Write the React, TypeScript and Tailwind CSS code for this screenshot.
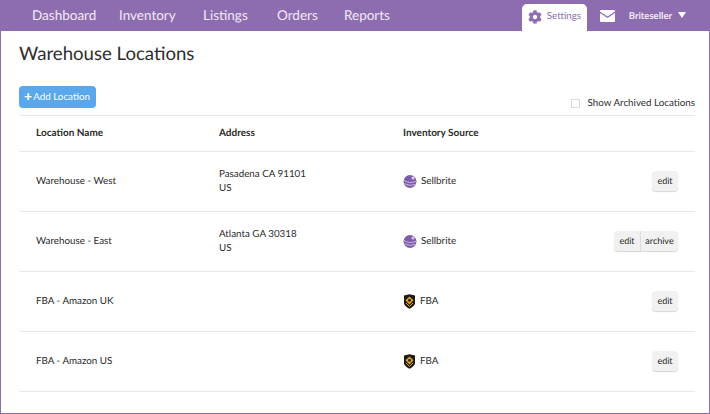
import { FaCog } from "react-icons/fa"

const navItems = [
  { label: "Dashboard", className: "w-[87px]" },
  { label: "Inventory", className: "w-[84px]" },
  { label: "Listings", className: "w-[74px]" },
  { label: "Orders", className: "w-[67px]" },
  { label: "Reports", className: "w-[60px]" },
]

const rows = [
  { name: "Warehouse - West", address: ["Pasadena CA 91101", "US"], source: "Sellbrite", archive: false },
  { name: "Warehouse - East", address: ["Atlanta GA 30318", "US"], source: "Sellbrite", archive: true },
  { name: "FBA - Amazon UK", address: [], source: "FBA", archive: false },
  { name: "FBA - Amazon US", address: [], source: "FBA", archive: false },
]

function SellbriteIcon() {
  return (
    <svg width="14" height="15" viewBox="0 0 14 15" className="shrink-0">
      <circle cx="7" cy="7.500" r="6.500" fill="#7d5cab" />
      <path d="M1 6.500c3 2.200 7.500 2.600 12 1" stroke="#e6def0" strokeWidth="0.7" fill="none" />
      <path d="M1.500 9.500c3 2 7 2.200 10.800 .8" stroke="#e6def0" strokeWidth="0.7" fill="none" />
      <circle cx="10" cy="4" r="1.500" fill="#d9cde9" />
    </svg>
  )
}

function FbaIcon() {
  return (
    <svg width="13" height="15" viewBox="0 0 12 15" className="shrink-0">
      <path d="M.5 1.500 6 .2l5.500 1.300v7.500c0 2.500-3 4.500-5.500 5.800C3.500 13.500.5 11.500.5 9z" fill="#1c1a17" />
      <path d="M6 2.600 10 6.200 6 10.400 2 6.200z" fill="#e3a21f" />
      <path d="M2.500 9 6 12.400 9.500 9" stroke="#e3a21f" strokeWidth="1" fill="none" />
      <circle cx="6" cy="6.300" r="1.500" fill="#2a2620" />
    </svg>
  )
}

function MailIcon() {
  return (
    <svg width="15" height="12" viewBox="0 0 15 12">
      <rect width="15" height="12" rx="1" fill="#ffffff" />
      <path d="M0 2.200 7.500 7.200 15 2.200" stroke="#8e6cb0" strokeWidth="1.200" fill="none" />
    </svg>
  )
}

function TopNav() {
  return (
    <nav className="flex h-[31px] items-stretch bg-[#8e6cb0] pl-[32px] pr-[24px] text-white">
      <div className="flex flex-1 items-center pb-[1px] text-[13.500px] text-[#f1ebf6]">
        {navItems.map((item) => (
          <span key={item.label} className={item.className}>
            {item.label}
          </span>
        ))}
      </div>
      <div className="mt-[4px] flex w-[65px] items-center gap-[5px] rounded-t-[5px] bg-white pb-[2px] pl-[6px] text-[#8e6cb0]">
        <FaCog size={14} />
        <span className="text-[9.800px]">Settings</span>
      </div>
      <div className="ml-[13px] flex items-center">
        <MailIcon />
      </div>
      <div className="ml-[14px] flex items-center pt-[3px] text-[9.500px] font-bold text-[#f1ebf6]">Briteseller</div>
      <div className="ml-[6px] mb-[2px] h-0 w-0 self-center border-x-[4.500px] border-t-[6px] border-x-transparent border-t-white" />
    </nav>
  )
}

export default function App() {
  return (
    <div className="flex h-[414px] w-[710px] flex-col overflow-hidden border-b border-[#8e6cb0] bg-white font-['Lato',sans-serif] [text-rendering:geometricPrecision]">
      <TopNav />
      <div className="flex flex-1 flex-col border-x border-[#8e6cb0] pl-[18px] pr-[14px]">
        <h1 className="mt-[9px] h-[46px] text-[18.600px] leading-[27px] text-[#2d2d2d]">Warehouse Locations</h1>
        <div className="flex h-[30px] items-start justify-between border-b border-[#e8e8e8]">
          <button className="flex h-[22px] w-[77px] items-center justify-center rounded-[4px] bg-[#5aa7ec] pb-[2px] pr-[1px] text-[9.800px] text-white">
            <span className="mr-[1px] text-[14px] font-black leading-none">+</span>Add Location
          </button>
          <label className="mt-[10px] flex items-center text-[9.800px] leading-[14px] text-[#2f2f2f]">
            <span className="mr-[8px] h-[9px] w-[9px] border border-[#dcdcdc] bg-white" />
            Show Archived Locations
          </label>
        </div>
        <div className="grid h-[36px] grid-cols-[183px_184px_1fr] items-center border-b border-[#e8e8e8] pl-[17px] text-[10px] font-bold text-[#2b2b2b]">
          <span>Location Name</span>
          <span>Address</span>
          <span>Inventory Source</span>
        </div>
        {rows.map((row) => (
          <div
            key={row.name}
            className="grid h-[60px] grid-cols-[183px_184px_1fr_auto] items-center border-b border-[#e8e8e8] px-[17px] pb-[1px] text-[9.800px] leading-[14px] text-[#2b2b2b]"
          >
            <span>{row.name}</span>
            <div>
              {row.address.map((line) => (
                <div key={line}>{line}</div>
              ))}
            </div>
            <div className="flex items-center gap-[4px]">
              {row.source === "FBA" ? <FbaIcon /> : <SellbriteIcon />}
              <span>{row.source}</span>
            </div>
            <div className="flex h-[20px] rounded-[4px] bg-[#f1f1f1] text-[9px] shadow-[0_1px_1px_#d5d5d5]">
              <span className="flex w-[26px] items-center justify-center">edit</span>
              {row.archive && (
                <span className="flex w-[38px] items-center justify-center border-l border-[#dddddd]">archive</span>
              )}
            </div>
          </div>
        ))}
      </div>
    </div>
  )
}
